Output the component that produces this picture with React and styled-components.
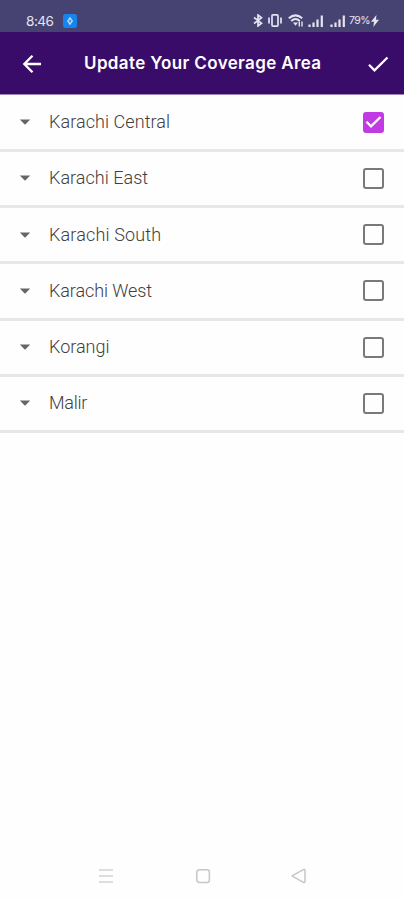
import React from "react";
import styled, { createGlobalStyle } from "styled-components";

const GlobalStyle = createGlobalStyle`
  *, *::before, *::after { box-sizing: border-box; }
  body { margin: 0; background: #fefefe; font-family: Roboto, "Liberation Sans", sans-serif; }
`;

const Screen = styled.div`
  display: flex;
  flex-direction: column;
  width: 404px;
  height: 900px;
  overflow: hidden;
  background: #fefefe;
`;

const StatusBar = styled.header`
  display: flex;
  align-items: center;
  justify-content: space-between;
  height: 32px;
  padding: 9px 25px 0 26px;
  background: #464372;
  color: #e6e3f0;
`;

const StatusGroup = styled.div`
  display: flex;
  align-items: center;
`;

const Clock = styled.span`
  width: 37px;
  font: 400 13.5px/20px Inter, sans-serif;
  letter-spacing: -0.45px;
`;

const Battery = styled.span`
  width: 22px;
  margin-left: 3px;
  font: 400 10.5px/20px Inter, sans-serif;
  letter-spacing: -0.5px;
  white-space: nowrap;
`;

const Icon = styled.svg`
  display: block;
  flex: none;
  margin-left: ${(p) => p.$gap || 0}px;
`;

const AppBar = styled.div`
  display: flex;
  align-items: center;
  height: 63px;
  padding: 1px 14px 0 22px;
  background: #3a0c69;
  border-bottom: 1px solid #9d88b5;
`;

const Title = styled.h1`
  flex: 1;
  margin: 0 0 1px 42px;
  color: #fff;
  font: 600 17px/24px Inter, sans-serif;
  letter-spacing: 0.37px;
  white-space: nowrap;
`;

const IconButton = styled.button`
  display: flex;
  padding: 0;
  border: 0;
  background: none;
`;

const List = styled.ul`
  flex: 1;
  margin: 0;
  padding: 0.6px 0 0;
  list-style: none;
`;

const Row = styled.li`
  display: flex;
  align-items: center;
  height: 56.25px;
  padding: 0 20px 0 19px;
  border-bottom: 3px solid #e7e7e7;
`;

const Label = styled.span`
  flex: 1;
  margin-left: 18px;
  color: #404040;
  font: 300 18px/24px Roboto, sans-serif;
  letter-spacing: ${(p) => p.$spacing}px;
`;

const Checkbox = styled.span`
  display: flex;
  align-items: center;
  justify-content: center;
  width: 21px;
  height: 21px;
  border: 2px solid ${(p) => (p.$checked ? "#c13ae4" : "#797979")};
  border-radius: 3px;
  background: ${(p) => (p.$checked ? "#c13ae4" : "transparent")};
`;

const NavBar = styled.nav`
  display: flex;
  align-items: center;
  justify-content: space-between;
  height: 48px;
  padding: 0 97px 0 98px;
`;

const areas = [
  { name: "Karachi Central", checked: true, spacing: 0.07 },
  { name: "Karachi East", spacing: 0.03 },
  { name: "Karachi South", spacing: 0.15 },
  { name: "Karachi West", spacing: -0.1 },
  { name: "Korangi", spacing: 0 },
  { name: "Malir", spacing: -0.25 },
];

const Signal = ({ gap }) => (
  <Icon $gap={gap} width="16" height="12" viewBox="0 0 16 12" stroke="currentColor" strokeWidth="2.2">
    <path d="M1.5 9.5V12M5.5 7.5V12M9.5 4.5V12M13.8 .5V12" />
  </Icon>
);

export default function App() {
  return (
    <Screen>
      <GlobalStyle />
      <StatusBar>
        <StatusGroup>
          <Clock>8:46</Clock>
          <Icon width="14" height="14" viewBox="0 0 14 14">
            <rect width="14" height="14" rx="2.5" fill="#1784ee" />
            <path d="M7 2.7 10 7 7 11.3 4 7Z" fill="#bfe4ff" />
            <path d="M7 5.3V8.7M5.5 7H8.5" stroke="#1784ee" />
          </Icon>
        </StatusGroup>
        <StatusGroup>
          <Icon width="10" height="13" viewBox="0 0 10 13" fill="none" stroke="currentColor" strokeWidth="1.7">
            <path d="m1 3.5 7.5 5.7L5 12V1l3.5 2.8L1 9.5" />
          </Icon>
          <Icon $gap={5} width="14" height="13" viewBox="0 0 14 13" fill="none" stroke="currentColor" strokeWidth="1.7">
            <rect x="4" y=".9" width="6" height="11.2" rx="1" />
            <path d="M1 3.5v6M13 3.5v6" />
          </Icon>
          <Icon $gap={6} width="16" height="13" viewBox="0 0 16 13" fill="none" stroke="currentColor" strokeWidth="2">
            <path d="M.8 4.3Q7.5-1.5 14.2 4.3M3.2 6.9Q7.5 3.2 11.8 6.9" />
            <path d="M5 8.5h5L7.5 11.8Z" fill="currentColor" stroke="none" />
            <path d="M11.3 7.5v5M14 12.5v-5" strokeWidth="1.4" />
          </Icon>
          <Signal gap={4} />
          <Signal gap={6} />
          <Battery>79%</Battery>
          <Icon width="8" height="12" viewBox="0 0 8 12" fill="currentColor">
            <path d="M5.4 0 0 6.8h3L2.3 12 8 4.8H5Z" />
          </Icon>
        </StatusGroup>
      </StatusBar>
      <AppBar>
        <IconButton aria-label="Back">
          <Icon width="20" height="20" viewBox="0 0 20 20" fill="none" stroke="#fff" strokeWidth="2.3">
            <path d="M19 10H2.5M10.5 1.8 2.3 10l8.2 8.2" />
          </Icon>
        </IconButton>
        <Title>Update Your Coverage Area</Title>
        <IconButton aria-label="Save">
          <Icon width="24" height="20" viewBox="0 0 24 20" fill="none" stroke="#fff" strokeWidth="2.3">
            <path d="m3 10.7 5.5 5.6L21.5 3.5" />
          </Icon>
        </IconButton>
      </AppBar>
      <List>
        {areas.map((area) => (
          <Row key={area.name}>
            <Icon width="12" height="6" viewBox="0 0 12 6" fill="#666">
              <path d="M.8.5h10.4L6 5.8Z" />
            </Icon>
            <Label $spacing={area.spacing}>{area.name}</Label>
            <Checkbox role="checkbox" aria-checked={!!area.checked} aria-label={area.name} $checked={area.checked}>
              {area.checked && (
                <Icon width="17" height="14" viewBox="0 0 17 14" fill="none" stroke="#fff" strokeWidth="2.3">
                  <path d="m1.5 6.8 4.5 4.6L15.5 2" />
                </Icon>
              )}
            </Checkbox>
          </Row>
        ))}
      </List>
      <NavBar>
        <Icon width="16" height="16" viewBox="0 0 16 16" stroke="#d2d2d2" strokeWidth="1.7">
          <path d="M1 2h14M1 8h14M1 14h14" />
        </Icon>
        <Icon $gap={1} width="16" height="16" viewBox="0 0 16 16" fill="none" stroke="#c6c6c6" strokeWidth="1.5">
          <rect x="1.8" y="1.8" width="12.6" height="12.6" rx="2.5" />
        </Icon>
        <Icon width="17" height="16" viewBox="0 0 17 16" fill="none" stroke="#c6c6c6" strokeWidth="1.5" strokeLinejoin="round">
          <path d="M2 7.8 13.4 1.6Q15 1 15 2.5v11q0 1.5-1.6.8Z" />
        </Icon>
      </NavBar>
    </Screen>
  );
}
